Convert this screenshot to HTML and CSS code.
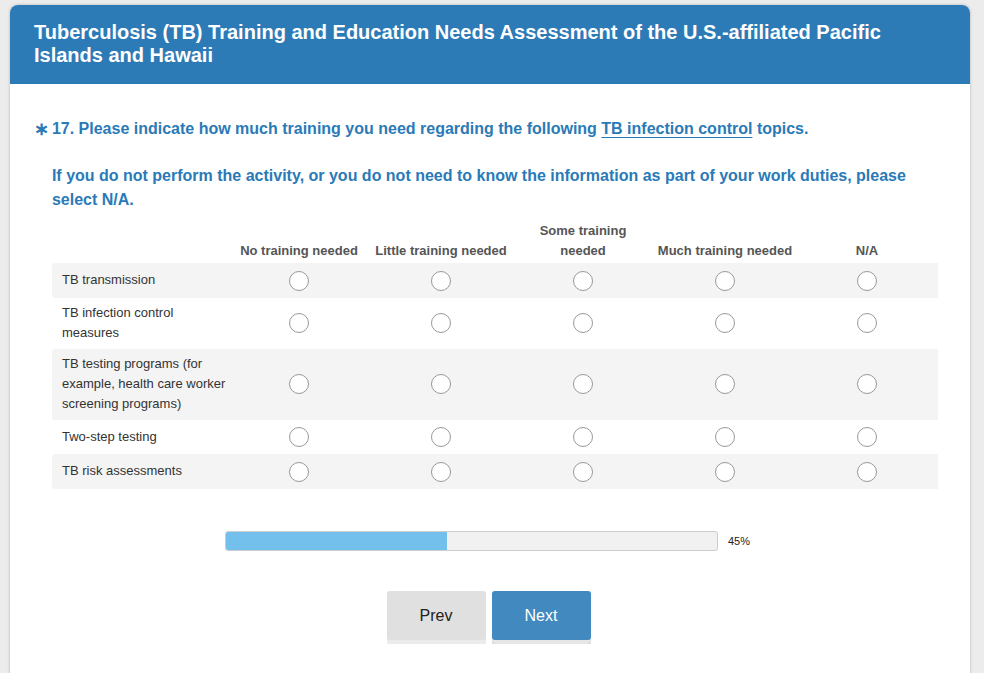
FILE: index.html
```html
<!DOCTYPE html>
<html>
<head>
  <title>TB Training Needs Assessment</title>
  <link rel="stylesheet" href="styles.css">
</head>
<body>
  <div class="survey">
    <div class="survey-head">
      <h1>Tuberculosis (TB) Training and Education Needs Assessment of the U.S.-affiliated Pacific Islands and Hawaii</h1>
    </div>
    <div class="survey-body">
      <div class="question">
        <span class="req">&#8727;</span>
        <div class="question-text">
          <p>17. Please indicate how much training you need regarding the following <u>TB infection control</u> topics.</p>
          <p class="note">If you do not perform the activity, or you do not need to know the information as part of your work duties, please select N/A.</p>
        </div>
      </div>

      <table class="matrix">
        <thead>
          <tr>
            <th class="lbl"></th>
            <th>No training needed</th>
            <th>Little training needed</th>
            <th>Some training<br>needed</th>
            <th>Much training needed</th>
            <th>N/A</th>
          </tr>
        </thead>
        <tbody>
          <tr class="alt">
            <td class="lbl">TB transmission</td>
            <td><input type="radio" name="q1"></td>
            <td><input type="radio" name="q1"></td>
            <td><input type="radio" name="q1"></td>
            <td><input type="radio" name="q1"></td>
            <td><input type="radio" name="q1"></td>
          </tr>
          <tr>
            <td class="lbl">TB infection control measures</td>
            <td><input type="radio" name="q2"></td>
            <td><input type="radio" name="q2"></td>
            <td><input type="radio" name="q2"></td>
            <td><input type="radio" name="q2"></td>
            <td><input type="radio" name="q2"></td>
          </tr>
          <tr class="alt">
            <td class="lbl">TB testing programs (for example, health care worker screening programs)</td>
            <td><input type="radio" name="q3"></td>
            <td><input type="radio" name="q3"></td>
            <td><input type="radio" name="q3"></td>
            <td><input type="radio" name="q3"></td>
            <td><input type="radio" name="q3"></td>
          </tr>
          <tr>
            <td class="lbl">Two-step testing</td>
            <td><input type="radio" name="q4"></td>
            <td><input type="radio" name="q4"></td>
            <td><input type="radio" name="q4"></td>
            <td><input type="radio" name="q4"></td>
            <td><input type="radio" name="q4"></td>
          </tr>
          <tr class="alt">
            <td class="lbl">TB risk assessments</td>
            <td><input type="radio" name="q5"></td>
            <td><input type="radio" name="q5"></td>
            <td><input type="radio" name="q5"></td>
            <td><input type="radio" name="q5"></td>
            <td><input type="radio" name="q5"></td>
          </tr>
        </tbody>
      </table>

      <div class="progress">
        <div class="progress-bar"><div class="progress-fill" style="width:45%"></div></div>
        <span class="progress-text">45%</span>
      </div>

      <div class="nav">
        <button type="button" class="btn btn-prev">Prev</button>
        <button type="button" class="btn btn-next">Next</button>
      </div>
    </div>
  </div>
</body>
</html>
```

FILE: styles.css
```css
* {box-sizing: border-box}
body {
  margin: 0;
  background: #ececec;
  font-family: "Liberation Sans", Arial, sans-serif;
}
.survey {
  width: 960px;
  margin: 5px 0 0 10px;
  background: #fff;
  border-radius: 8px 8px 0 0;
  box-shadow: 0 0 3px rgba(0,0,0,0.25);
  min-height: 700px;
}
.survey-head {
  background: #2d7bb6;
  border-radius: 8px 8px 0 0;
  padding: 16px 24px 16px 24px;
  height: 79px;
}
.survey-head h1 {
  margin: 0;
  color: #fff;
  font-size: 20px;
  line-height: 23px;
  font-weight: bold;
}
.survey-body {
  padding: 33px 32px 0 24px;
}
.question {
  display: flex;
  color: #2a7ab8;
  font-weight: bold;
  font-size: 16px;
  line-height: 24px;
}
.req {
  width: 19px;
  font-size: 18px;
}
.question-text p {
  margin: 0;
}
.question-text .note {
  margin-top: 23px;
}
.question-text u {
  text-underline-offset: 3px;
}
.matrix {
  margin: 9px 0 0 18px;
  width: 886px;
  table-layout: fixed;
  border-collapse: collapse;
  font-size: 13px;
  color: #333;
}
.matrix th {
  font-weight: bold;
  color: #555;
  line-height: 20px;
  padding: 0 0 2px;
  vertical-align: bottom;
  width: 142px;
}
.matrix th.lbl {
  width: 176px;
}
.matrix td {
  text-align: center;
  padding: 7px 0;
  line-height: 20px;
  height: 34px;
}
.matrix td.lbl {
  text-align: left;
  padding: 5px 0 5px 10px;
}
.matrix tr.alt td {
  background: #f4f4f4;
}
.matrix tr.alt td.lbl {
  border-radius: 3px 0 0 3px;
}
.matrix tbody tr:nth-child(2) td,
.matrix tbody tr:nth-child(3) td {
  padding-top: 5px;
  padding-bottom: 6px;
}
.matrix input[type=radio] {
  -webkit-appearance: none;
  appearance: none;
  width: 20px;
  height: 20px;
  margin: 0;
  border: 1px solid #999;
  border-radius: 50%;
  background: #fff;
  vertical-align: middle;
}
.progress {
  display: flex;
  align-items: center;
  margin: 42px 0 0 191px;
}
.progress-bar {
  width: 493px;
  height: 20px;
  border: 1px solid #ccc;
  border-radius: 3px;
  background: #f1f1f1;
  overflow: hidden;
}
.progress-fill {
  height: 100%;
  background: #74c0ec;
}
.progress-text {
  margin-left: 10px;
  font-size: 11px;
  color: #222;
}
.nav {
  display: flex;
  justify-content: center;
  gap: 6px;
  margin: 40px 0 0 5px;
}
.btn {
  width: 99px;
  height: 53px;
  border: none;
  border-radius: 3px;
  font-family: "Liberation Sans", Arial, sans-serif;
  font-size: 16px;
  cursor: pointer;
  padding-bottom: 4px;
}
.btn-prev {
  background: #e0e0e0;
  color: #222;
  box-shadow: inset 0 -4px 0 #ebebeb;
}
.btn-next {
  background: #4189bf;
  color: #fff;
  box-shadow: inset 0 -4px 0 #e6e6e6;
}
```
